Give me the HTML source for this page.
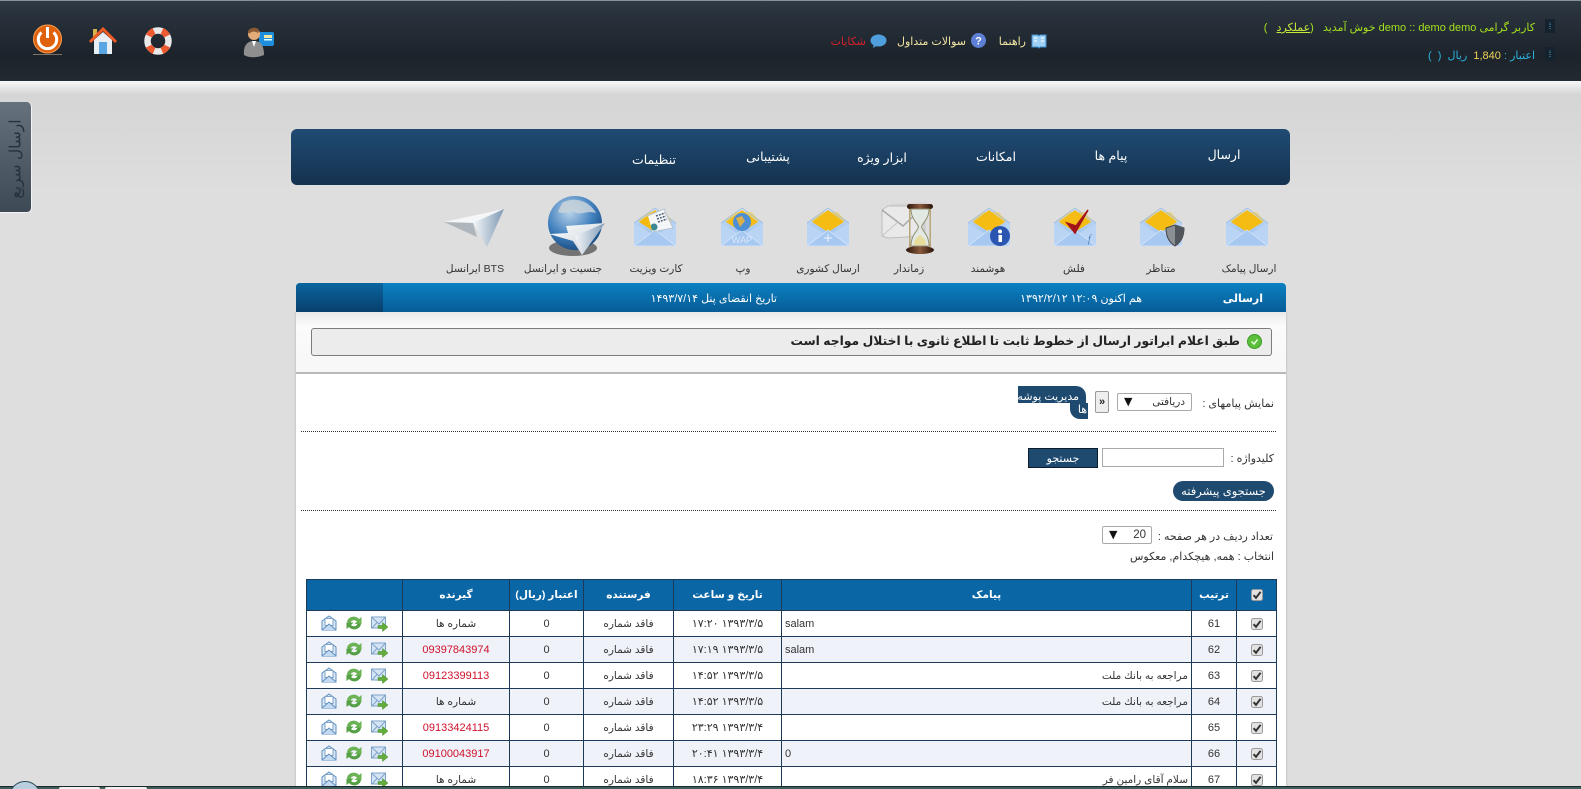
<!DOCTYPE html>
<html lang="fa">
<head>
<meta charset="utf-8">
<title>پنل پیامک</title>
<style>
html,body{margin:0;padding:0;width:1581px;height:789px;overflow:hidden;background:#dedede;}
body{position:relative;font-family:"Liberation Sans","DejaVu Sans",sans-serif;font-size:10.5px;color:#333;}
.a{position:absolute;white-space:nowrap;}
.r{position:absolute;white-space:nowrap;direction:rtl;}
svg{position:absolute;overflow:visible;}
#hdr{position:absolute;left:0;top:0;width:1581px;height:81px;background:linear-gradient(#303a45 0,#29323c 12px,#1c232b 55px,#222a32 81px);border-top:1px solid #8a8f95;box-sizing:border-box;}
#sh{position:absolute;left:0;top:81px;width:1581px;height:13px;background:linear-gradient(#f8f8f8,#d6d6d6);}
#bgg{position:absolute;left:0;top:94px;width:1581px;height:100px;background:linear-gradient(#d5d5d5,#dedede);}
#tab{position:absolute;left:0;top:102px;width:31px;height:110px;background:linear-gradient(#65717d,#3d4a56);border-radius:0 5px 5px 0;border-right:1px solid #f3f3f3;border-bottom:1px solid #f3f3f3;}
#tabt{position:absolute;left:16px;top:159px;transform:translate(-50%,-50%) rotate(-90deg);font-size:15.5px;color:#27313a;white-space:nowrap;direction:rtl;}
#nav{position:absolute;left:291px;top:129px;width:999px;height:56px;border-radius:6px;background:linear-gradient(#204b73,#15324f);}
.nt{position:absolute;color:#fff;font-size:12.5px;transform:translateX(-50%);white-space:nowrap;direction:rtl;}
.lb{position:absolute;top:263px;font-size:10.5px;color:#333;transform:translateX(-50%);white-space:nowrap;direction:rtl;}
#band{position:absolute;left:296px;top:283px;width:990px;height:29px;border-radius:4px 4px 0 0;background:linear-gradient(#0b81c2,#075c96);}
#bandd{position:absolute;left:296px;top:283px;width:87px;height:29px;border-radius:4px 0 0 0;background:linear-gradient(#0a659f,#083f6d);}
#panel{position:absolute;left:296px;top:312px;width:990px;height:477px;background:#fff;box-shadow:0 0 2px #aaa;}
#top{position:absolute;left:296px;top:312px;width:990px;height:60px;background:linear-gradient(#e9e9e9,#fbfbfb 14px,#f7f7f7);border-bottom:2px solid #b9b9b9;}
#note{position:absolute;left:311px;top:328px;width:959px;height:26px;background:#ececec;border:1px solid #7c7c7c;border-radius:3px;}
.dl{position:absolute;left:301px;width:975px;border-top:1px dotted #333;height:0;}
.sel{position:absolute;background:#fff;border:1px solid #a9a9a9;border-radius:2px;box-sizing:border-box;font-size:10.5px;}
.ar{font-family:"DejaVu Sans",sans-serif;font-size:11px;color:#111;}
table{position:absolute;left:306px;top:579px;width:970px;table-layout:fixed;border-collapse:collapse;direction:ltr;}
th{background:#0b66a5;color:#fff;font-size:10.5px;font-weight:bold;height:30px;padding:0;border:1px solid #1d3a58;direction:rtl;}
td{height:25px;padding:0;border:1px solid #1d3a58;text-align:center;font-size:11px;color:#333;position:relative;overflow:hidden;}
tr:nth-child(odd) td{background:#eff2f9;}
tr:nth-child(even) td{background:#fff;}
td.m{text-align:right;direction:rtl;padding:0 3px;font-size:10.5px;}
td.l{text-align:left;padding:0 3px;}
td.t{direction:rtl;font-size:11px;}
td.s{direction:rtl;font-size:10.5px;}
td.n{color:#d0112b;font-size:11px;}
td svg{position:static;vertical-align:middle;}
td.ic{white-space:nowrap;}
td.ic svg{margin:-4px 4.5px 0 4.5px;position:relative;top:1px;}
td.ic svg:last-child{top:2px;}
#task{position:absolute;left:0;top:786px;width:1581px;height:3px;background:#3f5f5e;border-top:1px solid #1b2b2b;box-sizing:border-box;}
</style>
</head>
<body>
<svg width="0" height="0" style="position:absolute">
<defs>
<linearGradient id="ev" x1="0" y1="0" x2="0" y2="1"><stop offset="0" stop-color="#cfe2f8"/><stop offset="1" stop-color="#8db7e8"/></linearGradient>
<radialGradient id="gl" cx=".4" cy=".3" r=".8"><stop offset="0" stop-color="#b9d3ea"/><stop offset=".55" stop-color="#3f7fbd"/><stop offset="1" stop-color="#123f74"/></radialGradient>
<linearGradient id="pl" x1="0" y1="0" x2="1" y2="1"><stop offset="0" stop-color="#ffffff"/><stop offset="1" stop-color="#c3ccd4"/></linearGradient>
<linearGradient id="pd" x1="0" y1="0" x2="1" y2="0"><stop offset="0" stop-color="#f3f6f8"/><stop offset="1" stop-color="#7f9ab5"/></linearGradient>
<linearGradient id="wd" x1="0" y1="0" x2="1" y2="0"><stop offset="0" stop-color="#2a150c"/><stop offset=".5" stop-color="#8a5a3c"/><stop offset="1" stop-color="#2a150c"/></linearGradient>
<symbol id="env" viewBox="0 0 42 38">
<path d="M0 15 21 0 42 15V38H0Z" fill="url(#ev)" stroke="#8fb0d8" stroke-width=".6"/>
<path d="M21 2 37 14 21 24 5 14Z" fill="#f4b90f"/>
<path d="M4 13 15 4 31 4 38 13 21 24Z" fill="#f7c21a" opacity=".4"/>
<path d="M0 15 18 26 0 38Z" fill="#b9d4f5"/><path d="M42 15 24 26 42 38Z" fill="#b9d4f5"/>
<path d="M0 38 21 22 42 38Z" fill="#a7c8f0" stroke="#d7e6fa" stroke-width=".7"/>
</symbol>
<symbol id="ck" viewBox="0 0 12 12"><rect x=".5" y=".5" width="11" height="11" rx="2" fill="#e2e2e2" stroke="#9b9b9b"/><path d="M2.6 6.2 5 8.8 9.6 2.8" fill="none" stroke="#333" stroke-width="2"/></symbol>
<symbol id="i1" viewBox="0 0 16 16"><path d="M1 6 8 1 15 6V15H1Z" fill="#dbe8f8" stroke="#5f8fbe"/><rect x="4" y="3.500" width="8" height="7" fill="#fff" stroke="#7ea3c9"/><path d="M1 15 8 9 15 15" fill="#c4d9f2" stroke="#5f8fbe"/></symbol>
<symbol id="i2" viewBox="0 0 16 16"><path d="M1 7C2 1 10 0 13 4L15.500 2V9H8.500L11 6.500C8 4 5 5.500 4.500 8Z" fill="#6cb356"/><path d="M15 9C14 15 6 16 3 12L.5 14V7.500H7.500L5 10C8 12.500 11 11 11.500 8.500Z" fill="#559f44"/></symbol>
<symbol id="i3" viewBox="0 0 17 16"><rect x=".5" y="1" width="14" height="11" fill="#d5e4f5" stroke="#7ea3c9"/><path d="M1 1.500 8 8 14 1.500M1 12 6 6.500" fill="none" stroke="#7ea3c9"/><path d="M7 9.500H11.500V6.500L17 11 11.500 15.500V12.500H7Z" fill="#63ad3c" stroke="#3f8a24" stroke-width=".5"/></symbol>
</defs>
</svg>

<div id="hdr"></div>
<div id="sh"></div>
<div id="bgg"></div>

<svg style="left:32px;top:24px" width="32" height="32" viewBox="0 0 32 32"><circle cx="15.500" cy="15" r="14.500" fill="#e0610c"/><circle cx="15.500" cy="15" r="14" fill="none" stroke="#f19a52"/><path d="M9.500 8.500A9.200 9.200 0 1 0 21.500 8.500" fill="none" stroke="#fff" stroke-width="3"/><rect x="14" y="3" width="3" height="11" fill="#fff"/><rect x="1" y="30" width="29" height="1" fill="#7b7466"/></svg>
<svg style="left:89px;top:27px" width="28" height="28" viewBox="0 0 28 28"><rect x="4" y="2" width="4" height="8" fill="#d8b24d"/><path d="M5 13V27H23V13L14 5Z" fill="#e9eef3"/><rect x="10" y="15" width="8" height="12" fill="#5aa6e4"/><path d="M1 15 14 2 27 15" fill="none" stroke="#ee5a26" stroke-width="3"/></svg>
<svg style="left:144px;top:27px" width="28" height="28" viewBox="0 0 28 28"><circle cx="14" cy="14" r="10.500" fill="none" stroke="#e9e9e9" stroke-width="6.500"/><path d="M5 9A10.500 10.500 0 0 1 10 4M18 4A10.500 10.500 0 0 1 23 9M23 19A10.500 10.500 0 0 1 18 24M10 24A10.500 10.500 0 0 1 5 19" fill="none" stroke="#ee5a30" stroke-width="6.500"/></svg>
<svg style="left:243px;top:25px" width="33" height="32" viewBox="0 0 33 32"><rect x="16" y="7" width="15" height="14" rx="2" fill="#1e8fdc"/><rect x="21" y="10" width="8" height="3" fill="#f2e6a0"/><rect x="21" y="14" width="8" height="1.500" fill="#dff"/><circle cx="11" cy="9" r="6" fill="#e3ab78"/><path d="M5 7C5 2 16 1 16 6L15 8C12 6 8 6 6 9Z" fill="#8b5a34"/><path d="M1 30C0 20 5 16 11 16 18 16 21 21 21 30 14 33 6 33 1 30Z" fill="#8f8f8f"/><path d="M9 16H13L11 22Z" fill="#fff"/></svg>

<div class="r" style="right:46px;top:21px;font-size:11px;color:#a4e01e;">کاربر گرامی demo :: demo demo خوش آمدید &nbsp;&nbsp;(<span style="text-decoration:underline;color:#c6ea3a">عملکرد</span> &nbsp;&nbsp;)</div>
<div class="a" style="left:1545px;top:19px;width:10px;height:14px;background:#16222e;color:#4eb6d8;font-size:9px;line-height:14px;text-align:center;">⁞</div>
<div class="a" style="left:1545px;top:47px;width:10px;height:14px;background:#16222e;color:#4eb6d8;font-size:9px;line-height:14px;text-align:center;">⁞</div>
<div class="r" style="right:46px;top:49px;font-size:11px;color:#2bb3dc;">اعتبار : <span style="color:#f1d35a">1,840</span> &nbsp;ریال &nbsp;( &nbsp;)</div>

<div class="r" style="right:555px;top:35px;font-size:11px;color:#f3e6a6;">راهنما</div>
<svg style="left:1031px;top:34px" width="16" height="14" viewBox="0 0 16 14"><path d="M1 1H7L8 2 9 1H15V13H9L8 14 7 13H1Z" fill="#9fd0f5" stroke="#3f8fd0"/><path d="M3 4H6M3 7H6M10 4H13M10 7H13" stroke="#fff"/></svg>
<div class="r" style="right:615px;top:35px;font-size:11px;color:#f3e6a6;">سوالات متداول</div>
<svg style="left:971px;top:33px" width="15" height="15" viewBox="0 0 15 15"><circle cx="7.500" cy="7.500" r="7.500" fill="#5d7fd6"/><text x="7.500" y="11.500" font-size="11" font-weight="bold" fill="#fff" text-anchor="middle" font-family="Liberation Sans">?</text></svg>
<div class="r" style="right:715px;top:35px;font-size:11px;color:#d8202c;">شکایات</div>
<svg style="left:870px;top:34px" width="17" height="14" viewBox="0 0 17 14"><ellipse cx="8.500" cy="6.500" rx="8" ry="6" fill="#4e9fdc"/><path d="M4 10 3 14 8 11Z" fill="#4e9fdc"/></svg>

<div id="tab"></div>
<div id="tabt">ارسال سریع</div>

<div id="nav"></div>
<div class="nt" style="left:1224px;top:147px">ارسال</div>
<div class="nt" style="left:1111px;top:148px">پیام ها</div>
<div class="nt" style="left:996px;top:149px">امکانات</div>
<div class="nt" style="left:882px;top:150px">ابزار ویژه</div>
<div class="nt" style="left:768px;top:149px">پشتیبانی</div>
<div class="nt" style="left:654px;top:152px">تنظیمات</div>

<!-- icon row -->
<svg style="left:1226px;top:208px" width="42" height="38"><use href="#env"/></svg>
<svg style="left:1140px;top:208px" width="42" height="38"><use href="#env"/><path d="M26 20 35 17 44 20C44 30 40 35 35 38 30 35 26 30 26 20Z" fill="#8a8f94" stroke="#444"/><path d="M35 17 44 20C44 30 40 35 35 38Z" fill="#50565c"/></svg>
<svg style="left:1054px;top:208px" width="42" height="38"><use href="#env"/><path d="M13 15 21 25 34 2 22 18Z" fill="#a3141b" stroke="#a3141b" stroke-width="1.500"/><text x="34" y="34" font-size="10" font-style="italic" fill="#4b7fb5" font-family="Liberation Serif">f</text></svg>
<svg style="left:968px;top:208px" width="42" height="38"><use href="#env"/><circle cx="32" cy="28" r="10" fill="#2a55b0"/><rect x="30.500" y="27" width="3.500" height="7" fill="#fff"/><circle cx="32" cy="23.500" r="2" fill="#fff"/></svg>
<svg style="left:880px;top:198px" width="58" height="58" viewBox="0 0 58 58"><path d="M10 6 46 4V36H10Z" fill="#d2d2d2" opacity=".7"/><path d="M2 12 8 8H44V38L8 40 2 38Z" fill="#e9e9e9" stroke="#bdbdbd"/><path d="M2 12 23 28 44 8" fill="none" stroke="#a8a8a8" stroke-width="1.500"/><path d="M2 38 18 24" stroke="#c4c4c4"/><rect x="27" y="6" width="26" height="5" rx="2.500" fill="url(#wd)"/><ellipse cx="40" cy="52" rx="14" ry="4" fill="url(#wd)"/><path d="M31 11H49C49 21 43 24 41.500 29 43 34 49 37 49 48H31C31 37 37 34 38.500 29 37 24 31 21 31 11Z" fill="#e2e8e2" stroke="#8f8f70"/><path d="M34 47H46C46 42 43 39 40 37 37 39 34 42 34 47Z" fill="#e8dc9a"/><rect x="29" y="11" width="1.500" height="38" fill="#b8a878"/><rect x="49.500" y="11" width="1.500" height="38" fill="#b8a878"/></svg>
<svg style="left:807px;top:208px" width="42" height="38"><use href="#env"/><path d="M21 26V34M17 30H25" stroke="#eef5ff" stroke-width="1"/></svg>
<svg style="left:721px;top:208px" width="42" height="38"><use href="#env"/><circle cx="21" cy="14" r="9" fill="#4c8fd6"/><path d="M15 10 21 8 24 13 19 19Z" fill="#d8b04c"/><text x="21" y="35" font-size="9" fill="#dbe8f8" text-anchor="middle" font-family="Liberation Sans">WAP</text></svg>
<svg style="left:634px;top:208px" width="42" height="38"><use href="#env"/><path d="M13 8 30 1 39 20 18 24Z" fill="#f4f6f8" stroke="#b7c4d0"/><path d="M22 8 31 5M23 11 32 8M24 14 33 11" stroke="#4d6178" stroke-width="1.500" stroke-dasharray="2 1"/><circle cx="20" cy="19" r="3.500" fill="#3b8795"/><path d="M6 14 14 8 18 22Z" fill="#f4b90f"/></svg>
<svg style="left:546px;top:195px" width="62" height="66" viewBox="0 0 62 66"><ellipse cx="27" cy="53" rx="24" ry="8" fill="#2c2c2c" opacity=".6"/><circle cx="29" cy="28" r="27" fill="url(#gl)"/><path d="M16 8C26 2 42 4 50 18 40 15 36 21 28 17 22 15 20 20 12 17Z" fill="#c9d3da" opacity=".85"/><path d="M20 31 59 28 36 60 27 46 3 39 22 38Z" fill="url(#pl)"/><path d="M59 28 36 60 29 41Z" fill="url(#pd)"/></svg>
<svg style="left:443px;top:207px" width="62" height="42" viewBox="0 0 62 42"><path d="M1 15 61 2 38 16 30 16Z" fill="#f4f6f7"/><path d="M1 15 30 16 34 30Z" fill="#aeb6bc"/><path d="M61 2 30 16 44 40Z" fill="url(#pd)"/></svg>

<div class="lb" style="left:1249px">ارسال پیامک</div>
<div class="lb" style="left:1161px">متناظر</div>
<div class="lb" style="left:1074px">فلش</div>
<div class="lb" style="left:988px">هوشمند</div>
<div class="lb" style="left:909px">زماندار</div>
<div class="lb" style="left:828px">ارسال کشوری</div>
<div class="lb" style="left:743px">وپ</div>
<div class="lb" style="left:656px">کارت ویزیت</div>
<div class="lb" style="left:563px">جنسیت و ایرانسل</div>
<div class="lb" style="left:475px">BTS ایرانسل</div>

<div id="panel"></div>
<div id="band"></div><div id="bandd"></div>
<div class="r" style="right:318px;top:292px;color:#fff;font-weight:bold;font-size:11px;">ارسالی</div>
<div class="r" style="right:439px;top:292px;color:#fff;font-size:11px;">هم اکنون ۱۲:۰۹ ۱۳۹۲/۲/۱۲</div>
<div class="r" style="right:804px;top:292px;color:#fff;font-size:11px;">تاریخ انقضای پنل ۱۴۹۳/۷/۱۴</div>

<div id="top"></div>
<div id="note"></div>
<div class="r" style="right:341px;top:334px;font-size:12.3px;font-weight:bold;color:#222;">طبق اعلام ابراتور ارسال از خطوط ثابت تا اطلاع ثانوی با اختلال مواجه است</div>
<svg style="left:1247px;top:334px" width="15" height="15" viewBox="0 0 15 15"><circle cx="7.500" cy="7.500" r="7" fill="#5cbf3a" stroke="#3c9a24"/><path d="M4.500 7.500 7 10 10.500 5.500" fill="none" stroke="#e8ffe0" stroke-width="1.500"/></svg>

<div class="r" style="right:307px;top:397px;font-size:11px;">نمایش پیامهای :</div>
<div class="sel" style="left:1117px;top:393px;width:75px;height:18px;line-height:16px;"><span class="a ar" style="left:6px;top:0;">▼</span><span class="r" style="right:6px;top:0">دریافتی</span></div>
<div class="a" style="left:1095px;top:391px;width:14px;height:22px;background:#eee;border:1px solid #999;border-radius:2px;box-sizing:border-box;line-height:20px;text-align:center;color:#222;font-size:11px;font-weight:bold;">»</div>
<div class="a" style="left:1018px;top:386px;width:68px;height:17px;background:#1f4a70;border-radius:0 10px 0 0;"></div>
<div class="a" style="left:1070px;top:403px;width:18px;height:16px;background:#1f4a70;border-radius:0 0 0 10px;"></div>
<div class="r" style="right:502px;top:390px;color:#fff;font-size:11px;">مدیریت پوشه</div>
<div class="r" style="right:494px;top:403px;color:#fff;font-size:11px;">ها</div>
<div class="dl" style="top:431px"></div>

<div class="r" style="right:307px;top:452px;font-size:11px;">کلیدواژه :</div>
<div class="a" style="left:1102px;top:448px;width:122px;height:19px;background:#fff;border:1px solid #a9a9a9;box-sizing:border-box;"></div>
<div class="a" style="left:1028px;top:448px;width:70px;height:20px;background:#1f4a70;border:1px solid #0c1c2c;box-sizing:border-box;color:#fff;text-align:center;line-height:21px;font-size:11px;direction:rtl;">جستجو</div>
<div class="a" style="left:1173px;top:481px;width:101px;height:20px;background:#1f4a70;border-radius:10px;color:#fff;text-align:center;line-height:23px;font-size:11.5px;direction:rtl;">جستجوی پیشرفته</div>
<div class="dl" style="top:510px"></div>

<div class="r" style="right:308px;top:530px;font-size:11px;">تعداد ردیف در هر صفحه :</div>
<div class="sel" style="left:1102px;top:526px;width:50px;height:18px;line-height:16px;"><span class="a ar" style="left:6px;top:0;">▼</span><span class="a" style="right:5px;top:0;font-size:11.5px;">20</span></div>
<div class="r" style="right:307px;top:550px;font-size:11px;">انتخاب : همه, هیچکدام, معکوس</div>

<table>
<colgroup><col style="width:96px"><col style="width:107px"><col style="width:74px"><col style="width:90px"><col style="width:108px"><col style="width:410px"><col style="width:45px"><col style="width:40px"></colgroup>
<tr><th></th><th>گیرنده</th><th>اعتبار (ریال)</th><th>فرستنده</th><th>تاریخ و ساعت</th><th>پیامک</th><th>ترتیب</th><th><svg style="position:static;vertical-align:middle" width="12" height="12"><use href="#ck"/></svg></th></tr>
<tr><td class="ic"><svg width="16" height="16"><use href="#i1"/></svg><svg width="16" height="16"><use href="#i2"/></svg><svg width="17" height="16"><use href="#i3"/></svg></td><td class="s">شماره ها</td><td>0</td><td class="s">فاقد شماره</td><td class="t">۱۳۹۳/۳/۵ ۱۷:۲۰</td><td class="l">salam</td><td>61</td><td><svg width="12" height="12"><use href="#ck"/></svg></td></tr>
<tr><td class="ic"><svg width="16" height="16"><use href="#i1"/></svg><svg width="16" height="16"><use href="#i2"/></svg><svg width="17" height="16"><use href="#i3"/></svg></td><td class="n">09397843974</td><td>0</td><td class="s">فاقد شماره</td><td class="t">۱۳۹۳/۳/۵ ۱۷:۱۹</td><td class="l">salam</td><td>62</td><td><svg width="12" height="12"><use href="#ck"/></svg></td></tr>
<tr><td class="ic"><svg width="16" height="16"><use href="#i1"/></svg><svg width="16" height="16"><use href="#i2"/></svg><svg width="17" height="16"><use href="#i3"/></svg></td><td class="n">09123399113</td><td>0</td><td class="s">فاقد شماره</td><td class="t">۱۳۹۳/۳/۵ ۱۴:۵۲</td><td class="m">مراجعه به بانك ملت</td><td>63</td><td><svg width="12" height="12"><use href="#ck"/></svg></td></tr>
<tr><td class="ic"><svg width="16" height="16"><use href="#i1"/></svg><svg width="16" height="16"><use href="#i2"/></svg><svg width="17" height="16"><use href="#i3"/></svg></td><td class="s">شماره ها</td><td>0</td><td class="s">فاقد شماره</td><td class="t">۱۳۹۳/۳/۵ ۱۴:۵۲</td><td class="m">مراجعه به بانك ملت</td><td>64</td><td><svg width="12" height="12"><use href="#ck"/></svg></td></tr>
<tr><td class="ic"><svg width="16" height="16"><use href="#i1"/></svg><svg width="16" height="16"><use href="#i2"/></svg><svg width="17" height="16"><use href="#i3"/></svg></td><td class="n">09133424115</td><td>0</td><td class="s">فاقد شماره</td><td class="t">۱۳۹۳/۳/۴ ۲۳:۲۹</td><td class="m"></td><td>65</td><td><svg width="12" height="12"><use href="#ck"/></svg></td></tr>
<tr><td class="ic"><svg width="16" height="16"><use href="#i1"/></svg><svg width="16" height="16"><use href="#i2"/></svg><svg width="17" height="16"><use href="#i3"/></svg></td><td class="n">09100043917</td><td>0</td><td class="s">فاقد شماره</td><td class="t">۱۳۹۳/۳/۴ ۲۰:۴۱</td><td class="l">0</td><td>66</td><td><svg width="12" height="12"><use href="#ck"/></svg></td></tr>
<tr><td class="ic"><svg width="16" height="16"><use href="#i1"/></svg><svg width="16" height="16"><use href="#i2"/></svg><svg width="17" height="16"><use href="#i3"/></svg></td><td class="s">شماره ها</td><td>0</td><td class="s">فاقد شماره</td><td class="t">۱۳۹۳/۳/۴ ۱۸:۳۶</td><td class="m">سلام آقای رامین فر</td><td>67</td><td><svg width="12" height="12"><use href="#ck"/></svg></td></tr>
</table>

<div id="task"></div>
<div class="a" style="left:59px;top:787px;width:41px;height:2px;background:#f0f0f0;border-radius:2px 2px 0 0;"></div>
<div class="a" style="left:105px;top:787px;width:42px;height:2px;background:#f0f0f0;border-radius:2px 2px 0 0;"></div>
<div class="a" style="left:9px;top:781px;width:32px;height:32px;border-radius:50%;background:#b9cfe0;border:1px solid #2a4a58;box-sizing:border-box;"></div>
</body>
</html>
